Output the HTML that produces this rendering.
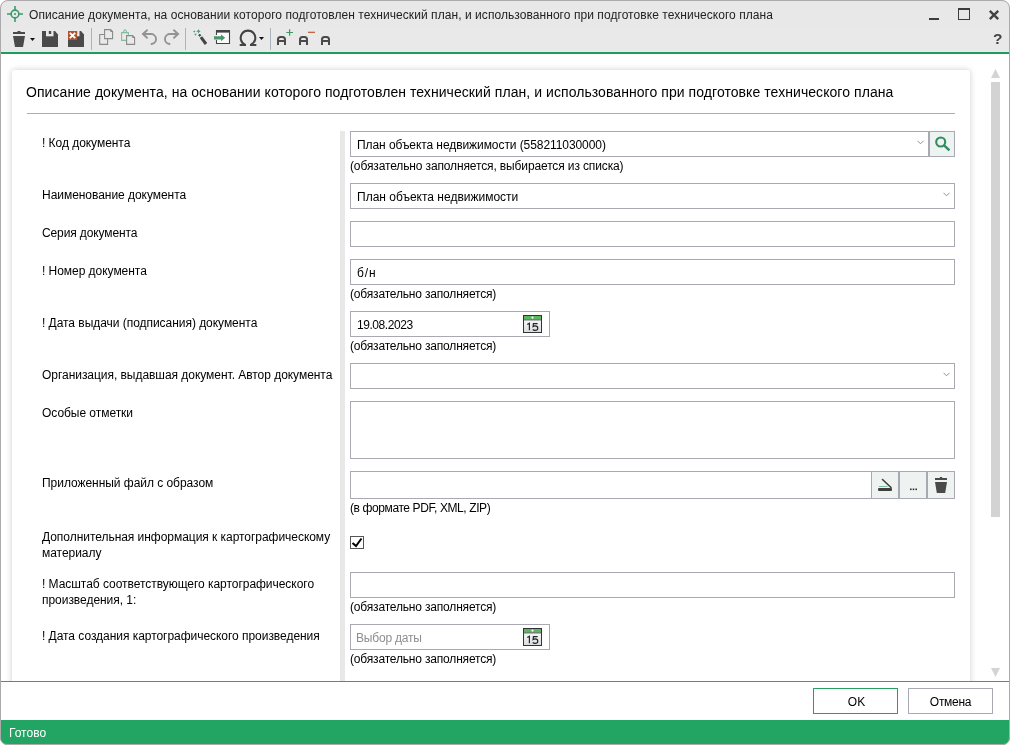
<!DOCTYPE html>
<html><head><meta charset="utf-8">
<style>
*{box-sizing:border-box;margin:0;padding:0}
html,body{width:1010px;height:745px;overflow:hidden;background:#fff}
body{font-family:"Liberation Sans",sans-serif;color:#000;position:relative}
.a{position:absolute}
#win{position:absolute;left:0;top:0;width:1010px;height:745px;border-radius:8px;overflow:hidden;background:#fff;will-change:transform}
#frame{position:absolute;left:0;top:0;width:1010px;height:745px;border:1px solid #ababab;border-radius:8px 8px 7px 7px;pointer-events:none}
#titlebar{position:absolute;left:0;top:0;width:1010px;height:52px;background:#e9e9e9}
#gline{position:absolute;left:0;top:52px;width:1010px;height:2px;background:#1f9d5c}
.ttl{font-size:12px;color:#222;white-space:nowrap}
.sep{position:absolute;top:28px;width:1px;height:22px;background:#aab2be}
#card{position:absolute;left:12px;top:70px;width:958px;height:640px;background:#fff;border-radius:3px;box-shadow:0 0 6px rgba(0,0,0,.2)}
.lbl{position:absolute;left:42px;font-size:12px;color:#000;white-space:nowrap;line-height:16px;letter-spacing:-0.04px}
.inp{position:absolute;left:350px;width:605px;height:26px;border:1px solid #a9a9b3;background:#fff}
.inp span{position:absolute;left:6px;top:6px;font-size:12px;line-height:14px;color:#000;white-space:nowrap}
.cap{position:absolute;left:350px;font-size:12px;color:#000;white-space:nowrap;line-height:14px}
#vbar{position:absolute;left:340px;top:131px;width:5px;height:550px;background:#e8e8e8}
#scroll{position:absolute;left:991px;top:82px;width:9px;height:435px;background:#d3d3d3}
#bottom{position:absolute;left:0;top:681px;width:1010px;height:39px;background:#fff}
#bline{position:absolute;left:0;top:681px;width:1010px;height:1px;background:#2aa566}
#status{position:absolute;left:0;top:720px;width:1010px;height:25px;background:#22a463}
.btn{position:absolute;top:688px;height:26px;width:85px;border:1px solid #a9a9b3;background:#fff;font-size:12px;text-align:center;line-height:24px;color:#000}
.chev{position:absolute;width:10px;height:6px}
.fbtn{position:absolute;top:471px;width:28px;height:28px;border:1px solid #a9a9b3;background:#eef3f1}
</style></head><body>
<div id="win">
  <div id="titlebar"></div>
  <div class="a" style="left:0;top:0;width:1010px;height:27px;background:#e8e8e8"></div>
  <div id="gline"></div>
  <!-- app icon -->
  <svg class="a" style="left:0;top:0" width="30" height="28" viewBox="0 0 30 28">
    <g fill="none" stroke="#3b9a6b" stroke-width="1.6">
      <circle cx="15" cy="14" r="3.9"/>
      <path d="M7 14H11M19 14H23M15 6V10M15 18V22"/>
    </g>
    <circle cx="15" cy="14" r="1.1" fill="#3b9a6b"/>
  </svg>
  <div class="a ttl" style="left:29px;top:8px;letter-spacing:0.06px">Описание документа, на основании которого подготовлен технический план, и использованного при подготовке технического плана</div>
  <!-- window controls -->
  <div class="a" style="left:929px;top:18px;width:10px;height:2px;background:#3c3c3c"></div>
  <div class="a" style="left:958px;top:8px;width:12px;height:12px;border:1px solid #3c3c3c;border-top-width:2px"></div>
  <svg class="a" style="left:988px;top:9px" width="12" height="12" viewBox="0 0 12 12"><path d="M1.8 1.8L10.2 10.2M10.2 1.8L1.8 10.2" stroke="#444" stroke-width="2.4"/></svg>
  <div class="a" style="left:993px;top:30px;font-size:15.5px;line-height:18px;font-weight:bold;color:#444">?</div>

  <!-- toolbar -->
  <svg class="a" style="left:0;top:26px" width="340" height="26" viewBox="0 26 340 26">
    <!-- trash -->
    <rect x="13" y="32" width="12" height="2" fill="#4a4a4a"/>
    <rect x="17.5" y="31" width="3" height="1.2" fill="#4a4a4a"/>
    <path d="M13 36H25L23 47H15Z" fill="#4a4a4a"/>
    <path d="M30 38H35L32.5 41Z" fill="#111"/>
    <!-- save -->
    <path d="M42 31H55L58 34.5V47H42Z" fill="#4a4a4a"/>
    <rect x="46" y="31" width="7.5" height="5.3" fill="#e9e9e9"/>
    <rect x="48.8" y="31" width="2.4" height="3" fill="#4a4a4a"/>
    <!-- save close -->
    <path d="M68 31H81L84 34.5V47H68Z" fill="#4a4a4a"/>
    <rect x="72" y="31" width="7.5" height="5.3" fill="#e9e9e9"/>
    <rect x="74.8" y="31" width="2.4" height="3" fill="#4a4a4a"/>
    <rect x="68" y="31" width="9" height="9" fill="#b4532e"/>
    <path d="M69.8 32.8L75.2 38.2M75.2 32.8L69.8 38.2" stroke="#fff" stroke-width="1.8"/>
    <!-- copy -->
    <g fill="none" stroke="#8a8a8a" stroke-width="1.1">
      <path d="M104.5 34.5H99.7V44.4H107.6V38.6"/>
      <path d="M104.6 29.6H110.6L112.6 31.6V38.6H104.6Z"/>
    </g>
    <path d="M110.3 29.3V31.9H112.9Z" fill="#8a8a8a"/>
    <!-- paste -->
    <g fill="none" stroke="#80bf9e" stroke-width="1.1">
      <path d="M126.4 40.4H121.6V32.6H123.2M126.8 32.6H128.4V35.2"/>
      <path d="M123.2 32.6L124.3 30H125.7L126.8 32.6Z"/>
    </g>
    <path d="M126.6 35.6H132.6L134.6 37.6V44.4H126.6Z" fill="none" stroke="#8a8a8a" stroke-width="1.1"/>
    <path d="M132.3 35.3V37.9H134.9Z" fill="#8a8a8a"/>
    <!-- undo -->
    <g fill="none" stroke="#939393" stroke-width="1.9" stroke-linecap="round">
      <path d="M143 34H150.5A5 5 0 0 1 151.5 44"/>
      <path d="M147 30.2L143 34L147 37.8"/>
    </g>
    <!-- redo -->
    <g fill="none" stroke="#939393" stroke-width="1.9" stroke-linecap="round">
      <path d="M178 34H170.5A5 5 0 0 0 169.5 44"/>
      <path d="M174 30.2L178 34L174 37.8"/>
    </g>
    <!-- wand -->
    <path d="M200.9 37.2L206 44" stroke="#444" stroke-width="3"/>
    <path d="M199 34.4L200.4 36.1" stroke="#444" stroke-width="2.3"/>
    <g fill="#48a06f">
      <path d="M198.5 29.2L199.3 30.6L200.7 31.3L199.3 32L198.5 33.4L197.7 32L196.3 31.3L197.7 30.6Z"/>
      <path d="M194.3 30.6L195.5 31.5L194.3 32.4L193.1 31.5Z"/>
      <path d="M194.2 33.8H196.8L195.5 35.8Z"/>
    </g>
    <!-- import -->
    <rect x="217" y="32" width="12" height="11" fill="#fafafa"/>
    <rect x="216" y="30" width="14" height="2.6" fill="#444"/>
    <path d="M216.5 30V35M216.5 40V43.5H229.5V30" fill="none" stroke="#444" stroke-width="1.1"/>
    <path d="M214 36.2H221V34.4L225.2 37.8L221 41.2V39.5H214Z" fill="#47996d"/>
    <!-- omega -->
    <path d="M245 44.6A7.3 7.3 0 1 1 251 44.6" fill="none" stroke="#444" stroke-width="2.1"/><rect x="239.7" y="44" width="6.3" height="2" fill="#444"/><rect x="250" y="44" width="6.3" height="2" fill="#444"/>
    <path d="M259 37H264L261.5 40Z" fill="#111"/>
    <!-- A+ A- A -->
    <g fill="none" stroke="#4a4a4a" stroke-width="2">
      <path d="M278 45V39.5Q278 37 280.5 37H282.5Q285 37 285 39.5V45M278 41H285"/>
      <path d="M300 45V39.5Q300 37 302.5 37H304.5Q307 37 307 39.5V45M300 41H307"/>
      <path d="M322 45V39.5Q322 37 324.5 37H326.5Q329 37 329 39.5V45M322 41H329"/>
    </g>
    <path d="M286.3 32.5H293M289.6 29.2V35.8" stroke="#3f9668" stroke-width="1.2"/>
    <path d="M308 32.3H315" stroke="#b9532f" stroke-width="1.15"/>
  </svg>
  <div class="sep" style="left:91px"></div>
  <div class="sep" style="left:185px"></div>
  <div class="sep" style="left:270px"></div>
  <svg class="a" style="left:990px;top:0" width="1" height="1"></svg>

  <div id="card"></div>
  <div class="a" style="left:26px;top:84px;font-size:14px;white-space:nowrap;color:#000;letter-spacing:0.065px">Описание документа, на основании которого подготовлен технический план, и использованного при подготовке технического плана</div>
  <div class="a" style="left:27px;top:113px;width:928px;height:1px;background:#a9abb5"></div>
  <div id="vbar"></div>

  <div class="lbl" style="top:135px">! Код документа</div>
  <div class="inp" style="top:131px;width:579px"><span style="letter-spacing:-0.075px">План объекта недвижимости (558211030000)</span>
    <svg class="chev" style="left:566px;top:8px;width:7px;height:5px" viewBox="0 0 7 5"><path d="M0.5 0.8L3.5 3.8L6.5 0.8" fill="none" stroke="#8d8d95" stroke-width="1"/></svg></div>
  <div class="a" style="left:928px;top:131px;width:27px;height:26px;border:1px solid #a9a9b3;border-left-width:2px;background:#edf3f0"></div>
  <svg class="a" style="left:932px;top:135px" width="18" height="18" viewBox="0 0 18 18"><circle cx="8.7" cy="7" r="4.5" fill="none" stroke="#2f8d5f" stroke-width="2.1"/><path d="M11.8 10.2L17.4 15.3" stroke="#2f8d5f" stroke-width="2.4"/></svg>
  <div class="cap" style="top:159px;letter-spacing:-0.13px">(обязательно заполняется, выбирается из списка)</div>

  <div class="lbl" style="top:187px">Наименование документа</div>
  <div class="inp" style="top:183px"><span>План объекта недвижимости</span>
    <svg class="chev" style="left:592px;top:8px;width:7px;height:5px" viewBox="0 0 7 5"><path d="M0.5 0.8L3.5 3.8L6.5 0.8" fill="none" stroke="#8d8d95" stroke-width="1"/></svg></div>

  <div class="lbl" style="top:225px;letter-spacing:-0.12px">Серия документа</div>
  <div class="inp" style="top:221px"></div>

  <div class="lbl" style="top:263px">! Номер документа</div>
  <div class="inp" style="top:259px"><span style="letter-spacing:0.9px">б/н</span></div>
  <div class="cap" style="top:287px;letter-spacing:-0.175px">(обязательно заполняется)</div>

  <div class="lbl" style="top:315px">! Дата выдачи (подписания) документа</div>
  <div class="inp" style="top:311px;width:200px"><span style="letter-spacing:-0.44px">19.08.2023</span></div>
  <svg class="a" style="left:523px;top:315px" width="19" height="18" viewBox="0 0 19 18"><defs><linearGradient id="cg315" x1="0" y1="0" x2="0" y2="1"><stop offset="0" stop-color="#fff"/><stop offset="1" stop-color="#d9dde0"/></linearGradient></defs><rect x="0.5" y="0.5" width="18" height="17" fill="url(#cg315)" stroke="#333"/><rect x="1" y="1" width="17" height="3.6" fill="#5cb660"/><rect x="1" y="4.4" width="17" height="1" fill="#555"/><circle cx="9.5" cy="2.6" r="1.1" fill="#fff"/><path d="M4.3 9.6L6.4 8.2V15.2" fill="none" stroke="#222" stroke-width="1.15"/><path d="M14.6 8.6H10.4L10.1 11.5C10.6 11.1 11.3 10.9 12.1 10.9C13.8 10.9 14.8 11.9 14.8 13.2C14.8 14.5 13.7 15.3 12.1 15.3C11.1 15.3 10.3 15 9.7 14.5" fill="none" stroke="#222" stroke-width="1.15"/></svg>
  <div class="cap" style="top:339px;letter-spacing:-0.175px">(обязательно заполняется)</div>

  <div class="lbl" style="top:367px">Организация, выдавшая документ. Автор документа</div>
  <div class="inp" style="top:363px">
    <svg class="chev" style="left:592px;top:8px;width:7px;height:5px" viewBox="0 0 7 5"><path d="M0.5 0.8L3.5 3.8L6.5 0.8" fill="none" stroke="#8d8d95" stroke-width="1"/></svg></div>

  <div class="lbl" style="top:405px">Особые отметки</div>
  <div class="inp" style="top:401px;height:58px"></div>

  <div class="lbl" style="top:475px">Приложенный файл с образом</div>
  <div class="inp" style="top:471px;height:28px"></div>
  <div class="fbtn" style="left:871px"></div>
  <div class="fbtn" style="left:899px"></div>
  <div class="fbtn" style="left:927px"></div>
  <svg class="a" style="left:871px;top:471px" width="84" height="28" viewBox="871 471 84 28">
    <path d="M882.5 479.5L891 487.5" stroke="#3f3f3f" stroke-width="1.6" stroke-linecap="round"/>
    <rect x="878" y="488" width="14" height="3" rx="1" fill="#3f3f3f"/>
    <rect x="879" y="486" width="8.5" height="1" fill="#7fbf9f"/>
    <rect x="910" y="488.5" width="1.6" height="1.6" fill="#333"/><rect x="912.7" y="488.5" width="1.6" height="1.6" fill="#333"/><rect x="915.4" y="488.5" width="1.6" height="1.6" fill="#333"/>
    <rect x="935" y="478" width="12" height="2" fill="#4a4a4a"/>
    <rect x="939.8" y="477" width="2.4" height="1.2" fill="#4a4a4a"/>
    <path d="M935 482H947L945.2 493H936.8Z" fill="#4a4a4a"/>
  </svg>
  <div class="cap" style="top:501px;letter-spacing:-0.4px">(в формате PDF, XML, ZIP)</div>

  <div class="lbl" style="top:529px">Дополнительная информация к картографическому<br>материалу</div>
  <div class="a" style="left:350px;top:536px;width:14px;height:13px;border:1px solid #555"></div>
  <svg class="a" style="left:350px;top:536px" width="14" height="13" viewBox="0 0 14 13"><path d="M2.5 7L6 10L11.5 2.5" fill="none" stroke="#000" stroke-width="2"/></svg>

  <div class="lbl" style="top:576px">! Масштаб соответствующего картографического<br>произведения, 1:</div>
  <div class="inp" style="top:572px"></div>
  <div class="cap" style="top:600px;letter-spacing:-0.175px">(обязательно заполняется)</div>

  <div class="lbl" style="top:628px">! Дата создания картографического произведения</div>
  <div class="inp" style="top:624px;width:200px"><span style="color:#8e8e8e;left:5px;letter-spacing:-0.2px">Выбор даты</span></div>
  <svg class="a" style="left:523px;top:628px" width="19" height="18" viewBox="0 0 19 18"><defs><linearGradient id="cg628" x1="0" y1="0" x2="0" y2="1"><stop offset="0" stop-color="#fff"/><stop offset="1" stop-color="#d9dde0"/></linearGradient></defs><rect x="0.5" y="0.5" width="18" height="17" fill="url(#cg628)" stroke="#333"/><rect x="1" y="1" width="17" height="3.6" fill="#5cb660"/><rect x="1" y="4.4" width="17" height="1" fill="#555"/><circle cx="9.5" cy="2.6" r="1.1" fill="#fff"/><path d="M4.3 9.6L6.4 8.2V15.2" fill="none" stroke="#222" stroke-width="1.15"/><path d="M14.6 8.6H10.4L10.1 11.5C10.6 11.1 11.3 10.9 12.1 10.9C13.8 10.9 14.8 11.9 14.8 13.2C14.8 14.5 13.7 15.3 12.1 15.3C11.1 15.3 10.3 15 9.7 14.5" fill="none" stroke="#222" stroke-width="1.15"/></svg>
  <div class="cap" style="top:652px;letter-spacing:-0.175px">(обязательно заполняется)</div>

  <div id="scroll"></div>
  <svg class="a" style="left:991px;top:69px" width="9" height="9" viewBox="0 0 9 9"><path d="M4.5 0L9 9H0Z" fill="#d4d4d4"/></svg>
  <svg class="a" style="left:991px;top:668px" width="9" height="9" viewBox="0 0 9 9"><path d="M0 0H9L4.5 9Z" fill="#d4d4d4"/></svg>
  <div id="bottom"></div>
  <div id="bline"></div>
  <div class="btn" style="left:813px;border-color:#2a9d5f;padding-top:1px;padding-left:2px">OK</div>
  <div class="btn" style="left:908px;letter-spacing:-0.3px;padding-top:1px">Отмена</div>
  <div id="status"></div>
  <div class="a" style="left:9px;top:726px;font-size:12px;color:#fff">Готово</div>
</div>
<div id="frame"></div>
</body></html>
